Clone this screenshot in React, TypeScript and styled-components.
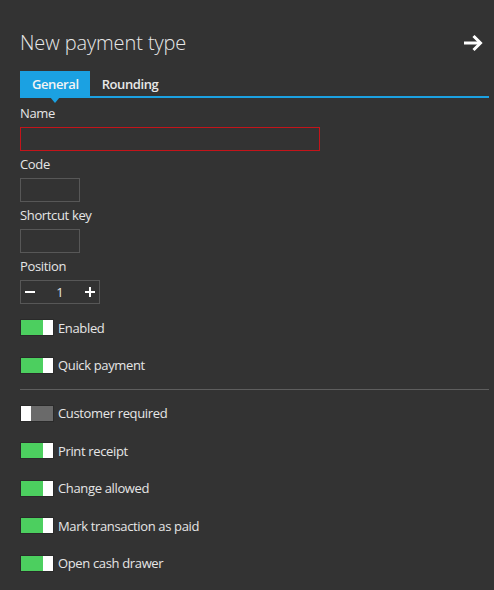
import React, { useState } from "react";
import styled, { createGlobalStyle } from "styled-components";

const Global = createGlobalStyle`
  html, body { margin: 0; padding: 0; background: #333333; }
  body { font-family: "Open Sans", "Noto Sans", sans-serif; color: #e4e4e4; }
  * { box-sizing: border-box; }
`;

const Page = styled.div`
  width: 494px;
  height: 590px;
  background: #333333;
  padding: 0 5px 0 20px;
  overflow: hidden;
`;

const Header = styled.div`
  display: flex;
  align-items: center;
  justify-content: space-between;
  height: 28px;
  margin-top: 29px;
  padding-right: 6px;
`;

const Title = styled.h1`
  margin: 0;
  font-size: 20px;
  font-weight: 300;
  color: #e8e8e8;
  letter-spacing: -0.1px;
  position: relative;
  top: -1px;
`;

const IconButton = styled.button`
  background: none;
  border: 0;
  padding: 0;
  width: 20px;
  height: 18px;
  display: flex;
  cursor: pointer;
`;

const TabBar = styled.div`
  display: flex;
  margin-top: 14px;
  border-bottom: 2px solid #1ba1e2;
  margin-bottom: 6px;
`;

const Tab = styled.div<{ $active?: boolean }>`
  position: relative;
  height: 25px;
  padding: 0 11px 0 12px;
  display: flex;
  align-items: center;
  font-size: 13px;
  font-weight: 600;
  letter-spacing: -0.4px;
  color: ${(p) => (p.$active ? "#f4f4f4" : "#e8e8e8")};
  background: ${(p) => (p.$active ? "#1ba1e2" : "transparent")};
  &::after {
    content: "";
    display: ${(p) => (p.$active ? "block" : "none")};
    position: absolute;
    left: 50%;
    bottom: -7px;
    margin-left: -5px;
    border-left: 5px solid transparent;
    border-right: 5px solid transparent;
    border-top: 6px solid #1ba1e2;
  }
`;

const Field = styled.div`
  display: flex;
  flex-direction: column;
  margin-bottom: 4px;
`;

const Label = styled.label`
  font-size: 13px;
  line-height: 18px;
  height: 18px;
  margin-bottom: 5px;
  letter-spacing: -0.35px;
  color: #e6e6e6;
`;

const Input = styled.input<{ $width: number; $invalid?: boolean }>`
  width: ${(p) => p.$width}px;
  height: 24px;
  background: transparent;
  border: 1px solid ${(p) => (p.$invalid ? "#c4141a" : "#575757")};
  color: #e6e6e6;
  font: inherit;
  outline: none;
  padding: 0 4px;
`;

const Stepper = styled.div`
  width: 80px;
  height: 24px;
  border: 1px solid #575757;
  display: flex;
  align-items: center;
  justify-content: space-between;
  padding: 0 3px 0 3px;
`;

const StepButton = styled.button`
  background: none;
  border: 0;
  padding: 0;
  width: 12px;
  height: 12px;
  display: flex;
  cursor: pointer;
`;

const StepValue = styled.span`
  font-size: 13px;
  color: #e6e6e6;
`;

const ToggleGroup = styled.div`
  display: flex;
  flex-direction: column;
  gap: 20.6px;
`;

const FirstGroup = styled(ToggleGroup)`
  margin-top: 15px;
`;

const Separator = styled.hr`
  border: 0;
  height: 1px;
  background: #5e5e5e;
  margin: 15px 0 15px 0;
`;

const Row = styled.div`
  display: flex;
  align-items: center;
  height: 17px;
  gap: 4px;
  font-size: 13px;
  letter-spacing: -0.35px;
  color: #e6e6e6;
  cursor: pointer;
`;

const Track = styled.div<{ $on: boolean }>`
  width: 34px;
  height: 17px;
  border: 1px solid #2a2a2a;
  background: ${(p) => (p.$on ? "#4ccf5f" : "#6a6a6a")};
  display: flex;
  justify-content: ${(p) => (p.$on ? "flex-end" : "flex-start")};
`;

const Thumb = styled.div`
  width: 10px;
  height: 100%;
  background: #ffffff;
`;

const Toggle = ({ label, initial }: { label: string; initial: boolean }) => {
  const [on, setOn] = useState(initial);
  return (
    <Row onClick={() => setOn(!on)}>
      <Track $on={on}>
        <Thumb />
      </Track>
      <span>{label}</span>
    </Row>
  );
};

export default function App() {
  const [pos, setPos] = useState(1);
  return (
    <>
      <Global />
      <Page>
        <Header>
          <Title>New payment type</Title>
          <IconButton aria-label="Close">
            <svg width="20" height="18" viewBox="0 0 20 18">
              <path d="M1 9 H17" stroke="#fff" strokeWidth="3" fill="none" />
              <path d="M10.5 2 L17.5 9 L10.5 16" stroke="#fff" strokeWidth="3" fill="none" />
            </svg>
          </IconButton>
        </Header>
        <TabBar>
          <Tab $active>General</Tab>
          <Tab>Rounding</Tab>
        </TabBar>
        <Field>
          <Label>Name</Label>
          <Input $width={300} $invalid />
        </Field>
        <Field>
          <Label>Code</Label>
          <Input $width={60} />
        </Field>
        <Field>
          <Label>Shortcut key</Label>
          <Input $width={60} />
        </Field>
        <Field>
          <Label>Position</Label>
          <Stepper>
            <StepButton aria-label="Decrease" onClick={() => setPos(pos - 1)}>
              <svg width="12" height="12" viewBox="0 0 12 12">
                <path d="M1 6 H11" stroke="#fff" strokeWidth="2" />
              </svg>
            </StepButton>
            <StepValue>{pos}</StepValue>
            <StepButton aria-label="Increase" onClick={() => setPos(pos + 1)}>
              <svg width="12" height="12" viewBox="0 0 12 12">
                <path d="M1 6 H11 M6 1 V11" stroke="#fff" strokeWidth="2" />
              </svg>
            </StepButton>
          </Stepper>
        </Field>
        <FirstGroup>
          <Toggle label="Enabled" initial />
          <Toggle label="Quick payment" initial />
        </FirstGroup>
        <Separator />
        <ToggleGroup>
          <Toggle label="Customer required" initial={false} />
          <Toggle label="Print receipt" initial />
          <Toggle label="Change allowed" initial />
          <Toggle label="Mark transaction as paid" initial />
          <Toggle label="Open cash drawer" initial />
        </ToggleGroup>
      </Page>
    </>
  );
}
